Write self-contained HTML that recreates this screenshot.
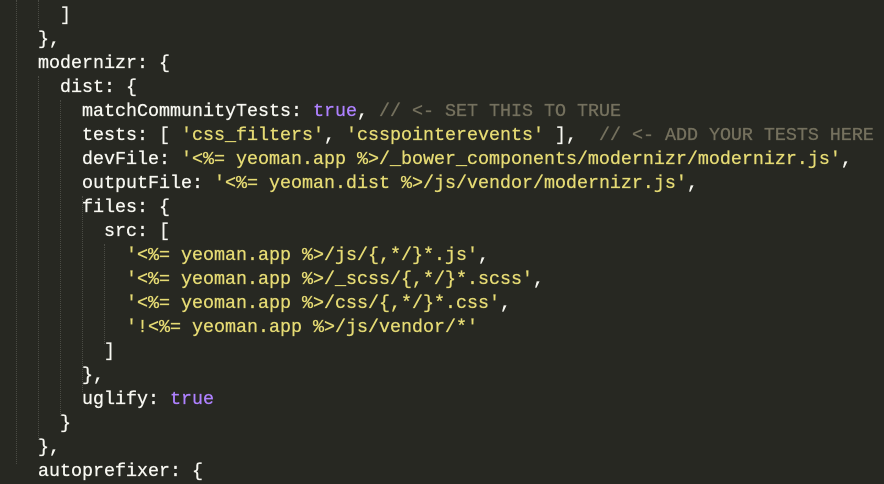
<!DOCTYPE html>
<html><head><meta charset="utf-8"><style>
html,body{margin:0;padding:0;background:#272822;width:884px;height:464px;overflow:hidden}
pre{margin:0;position:absolute;left:-6px;top:4px;font-family:"Liberation Mono",monospace;font-size:18.33px;line-height:24px;color:#f8f8f2;white-space:pre;-webkit-text-stroke:0.3px currentColor}
.s{color:#e6db74}.p{color:#ae81ff}.c{color:#75715e}
.g{position:absolute;width:0;border-left:1px dotted #4a4b44}
</style></head><body>
<div class="g" style="left:16px;top:0;height:464px"></div>
<div class="g" style="left:38px;top:0;height:28px"></div>
<div class="g" style="left:38px;top:76px;height:364px"></div>
<div class="g" style="left:60px;top:100px;height:316px"></div>
<div class="g" style="left:82px;top:196px;height:196px"></div>
<div class="g" style="left:104px;top:244px;height:100px"></div>
<pre>      ]
    },
    modernizr: {
      dist: {
        matchCommunityTests: <span class="p">true</span>, <span class="c">// &lt;- SET THIS TO TRUE</span>
        tests: [ <span class="s">'css_filters'</span>, <span class="s">'csspointerevents'</span> ],  <span class="c">// &lt;- ADD YOUR TESTS HERE IF</span>
        devFile: <span class="s">'&lt;%= yeoman.app %&gt;/_bower_components/modernizr/modernizr.js'</span>,
        outputFile: <span class="s">'&lt;%= yeoman.dist %&gt;/js/vendor/modernizr.js'</span>,
        files: {
          src: [
            <span class="s">'&lt;%= yeoman.app %&gt;/js/{,*/}*.js'</span>,
            <span class="s">'&lt;%= yeoman.app %&gt;/_scss/{,*/}*.scss'</span>,
            <span class="s">'&lt;%= yeoman.app %&gt;/css/{,*/}*.css'</span>,
            <span class="s">'!&lt;%= yeoman.app %&gt;/js/vendor/*'</span>
          ]
        },
        uglify: <span class="p">true</span>
      }
    },
    autoprefixer: {</pre>
</body></html>
